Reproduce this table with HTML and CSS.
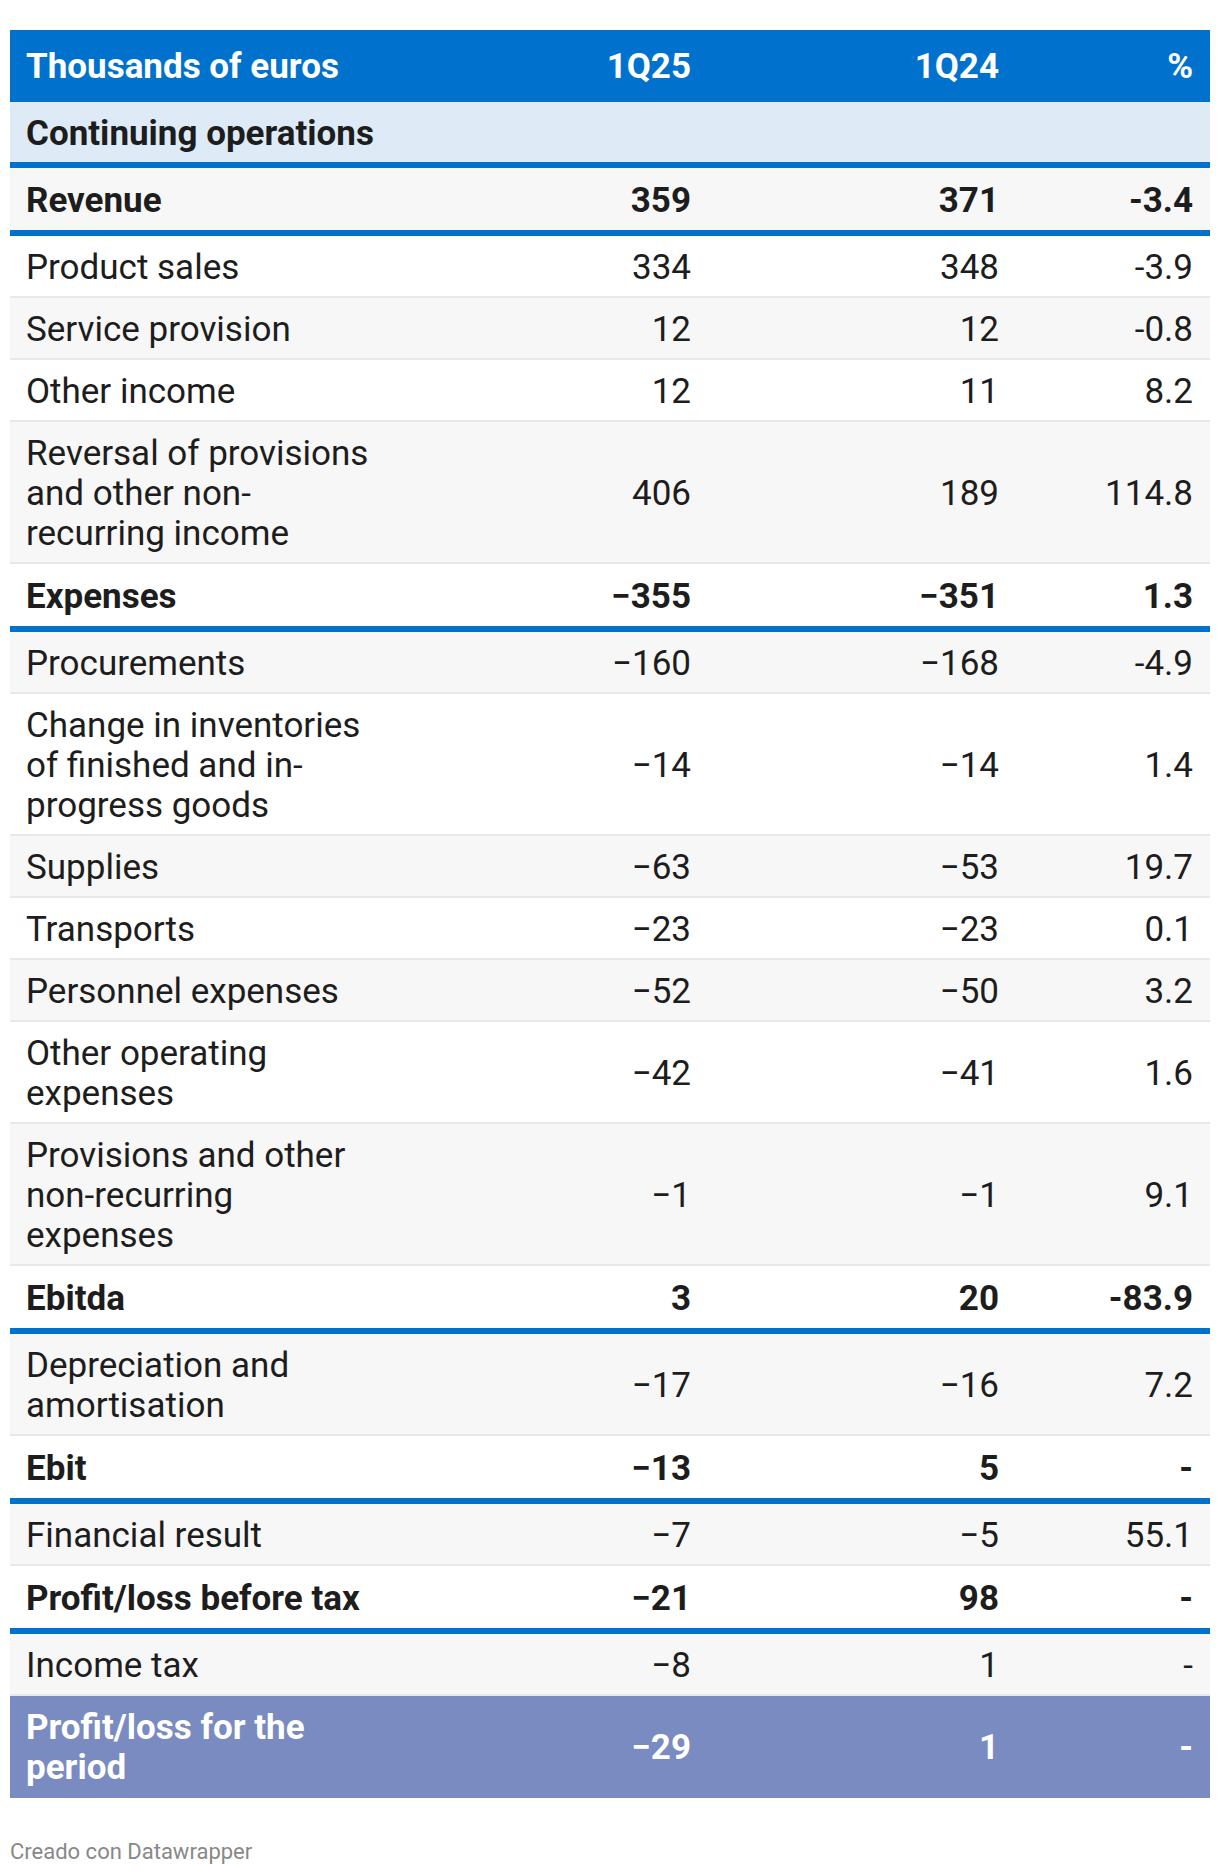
FILE: index.html
```html
<!DOCTYPE html>
<html lang="en">
<head>
<meta charset="utf-8">
<title>Thousands of euros</title>
<link rel="stylesheet" href="styles.css">
</head>
<body>
<div class="wrap">
<table class="fin">
<colgroup>
<col class="c-label"><col class="c-num"><col class="c-num2"><col class="c-pct">
</colgroup>
<thead>
<tr><th class="lbl">Thousands of euros</th><th>1Q25</th><th>1Q24</th><th>%</th></tr>
</thead>
<tbody>
<tr class="section"><td class="lbl" colspan="4">Continuing operations</td></tr>
<tr class="total odd"><td class="lbl">Revenue</td><td>359</td><td>371</td><td>-3.4</td></tr>
<tr><td class="lbl">Product sales</td><td>334</td><td>348</td><td>-3.9</td></tr>
<tr class="odd"><td class="lbl">Service provision</td><td>12</td><td>12</td><td>-0.8</td></tr>
<tr><td class="lbl">Other income</td><td>12</td><td>11</td><td>8.2</td></tr>
<tr class="odd"><td class="lbl">Reversal of provisions and other non-recurring income</td><td>406</td><td>189</td><td>114.8</td></tr>
<tr class="total"><td class="lbl">Expenses</td><td>−355</td><td>−351</td><td>1.3</td></tr>
<tr class="odd"><td class="lbl">Procurements</td><td>−160</td><td>−168</td><td>-4.9</td></tr>
<tr><td class="lbl">Change in inventories of finished and in-progress goods</td><td>−14</td><td>−14</td><td>1.4</td></tr>
<tr class="odd"><td class="lbl">Supplies</td><td>−63</td><td>−53</td><td>19.7</td></tr>
<tr><td class="lbl">Transports</td><td>−23</td><td>−23</td><td>0.1</td></tr>
<tr class="odd"><td class="lbl">Personnel expenses</td><td>−52</td><td>−50</td><td>3.2</td></tr>
<tr><td class="lbl">Other operating expenses</td><td>−42</td><td>−41</td><td>1.6</td></tr>
<tr class="odd"><td class="lbl">Provisions and other non-recurring expenses</td><td>−1</td><td>−1</td><td>9.1</td></tr>
<tr class="total"><td class="lbl">Ebitda</td><td>3</td><td>20</td><td>-83.9</td></tr>
<tr class="odd"><td class="lbl">Depreciation and amortisation</td><td>−17</td><td>−16</td><td>7.2</td></tr>
<tr class="total"><td class="lbl">Ebit</td><td>−13</td><td>5</td><td>-</td></tr>
<tr class="odd"><td class="lbl">Financial result</td><td>−7</td><td>−5</td><td>55.1</td></tr>
<tr class="total"><td class="lbl">Profit/loss before tax</td><td>−21</td><td>98</td><td>-</td></tr>
<tr class="odd"><td class="lbl">Income tax</td><td>−8</td><td>1</td><td>-</td></tr>
<tr class="final"><td class="lbl">Profit/loss for the period</td><td>−29</td><td>1</td><td>-</td></tr>
</tbody>
</table>
<p class="credit">Creado con Datawrapper</p>
</div>
</body>
</html>
```

FILE: styles.css
```css
html, body {
  margin: 0;
  padding: 0;
  background: #ffffff;
}

body {
  font-family: Roboto, "Noto Sans", "Liberation Sans", sans-serif;
  color: #1d1d1d;
}

.wrap {
  padding: 30px 10px 0;
}

.fin {
  width: 1200px;
  border-collapse: collapse;
  table-layout: fixed;
  font-size: 35px;
  line-height: 40px;
}

.c-label { width: 380px; }
.c-num { width: 318px; }
.c-num2 { width: 308px; }
.c-pct { width: 194px; }

.fin th,
.fin td {
  padding: 12px 17px 8px 16px;
  text-align: right;
  vertical-align: middle;
  font-weight: 400;
}

.fin .lbl {
  text-align: left;
}

.fin thead th {
  background: #0072cd;
  color: #ffffff;
  font-weight: 700;
  padding-top: 17px;
  padding-bottom: 15px;
}

.fin tbody tr {
  background: #ffffff;
  border-bottom: 2px solid #e8e8e8;
}

.fin tbody tr.odd {
  background: #f7f7f7;
}

.fin tbody tr.section {
  background: #deebf7;
  border-bottom: 6px solid #0072cd;
}

.fin tbody tr.section td {
  font-weight: 700;
}

.fin tbody tr.total {
  border-bottom: 6px solid #0072cd;
}

.fin tbody tr.total td {
  font-weight: 700;
  padding-top: 13px;
  padding-bottom: 9px;
}

.fin tbody tr.final {
  background: #798bc0;
  border-bottom: 0;
}

.fin tbody tr.final td {
  color: #ffffff;
  font-weight: 700;
  padding-top: 12px;
  padding-bottom: 10px;
}

.credit {
  margin: 40px 0 0;
  font-size: 22px;
  line-height: 28px;
  color: #888888;
}
```
